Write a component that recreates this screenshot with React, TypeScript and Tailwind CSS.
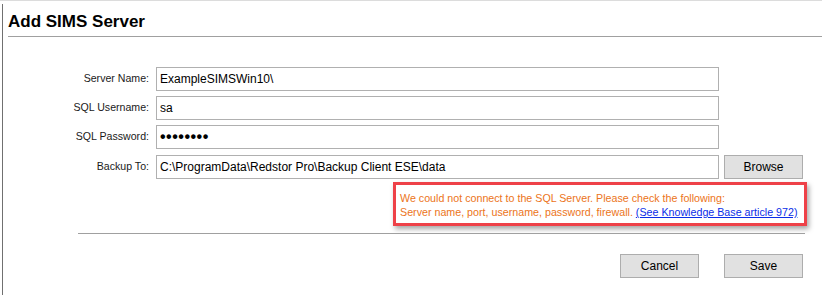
import React from "react";

const font = "font-['Liberation_Sans','Arial',sans-serif]";

const fields = [
  { label: "Server Name:", value: "ExampleSIMSWin10\\" },
  { label: "SQL Username:", value: "sa" },
  { label: "SQL Password:", value: "••••••••", password: true },
  { label: "Backup To:", value: "C:\\ProgramData\\Redstor Pro\\Backup Client ESE\\data", browse: true },
];

function WinButton({ children }: { children: React.ReactNode }) {
  return (
    <button className="h-[24px] w-[79px] border border-[#adadad] bg-[#e1e1e1] text-[12px] text-black">
      {children}
    </button>
  );
}

export default function App() {
  return (
    <div className={`h-[295px] w-[822px] overflow-hidden border-t border-[#dcdcdc] bg-white ${font}`}>
      <div className="ml-[2px] mt-[3px] h-full border-l border-[#707070]">
        <div className="ml-[5px] border-b border-[#a0a0a0] pt-[8px] pb-[4px]">
          <h1 className="text-[17px] font-bold leading-[20px] text-black">Add SIMS Server</h1>
        </div>

        <div className="mt-[30px] flex flex-col gap-[5px]">
          {fields.map((f) => (
            <div key={f.label} className="flex items-center">
              <span className="w-[146px] text-right text-[10.6px] text-[#1a1a1a]">{f.label}</span>
              <div
                className={`ml-[7px] flex h-[24px] w-[563px] items-center border border-[#b0b0b0] px-[3px] text-black ${
                  f.password ? "text-[16px] font-bold tracking-[0.5px]" : "text-[12px]"
                }`}
              >
                {f.value}
              </div>
              {f.browse && (
                <div className="ml-[5px]">
                  <WinButton>Browse</WinButton>
                </div>
              )}
            </div>
          ))}
        </div>

        <div className="ml-[390px] mt-[3px] h-[44px] w-[414px] whitespace-nowrap border-[3px] border-[#ee4148] px-[4px] pt-[6px] text-[10.7px] leading-[14px] text-[#ec7420] shadow-[2px_3px_5px_rgba(0,0,0,0.35)]">
          <p>We could not connect to the SQL Server. Please check the following:</p>
          <p>
            Server name, port, username, password, firewall.{" "}
            <a className="text-[#0a2ee8] underline">(See Knowledge Base article 972)</a>
          </p>
        </div>

        <div className="ml-[75px] mt-[7px] w-[727px] border-t border-[#a0a0a0]" />

        <div className="mt-[20px] flex w-[800px] justify-end gap-[25px]">
          <WinButton>Cancel</WinButton>
          <WinButton>Save</WinButton>
        </div>
      </div>
    </div>
  );
}
